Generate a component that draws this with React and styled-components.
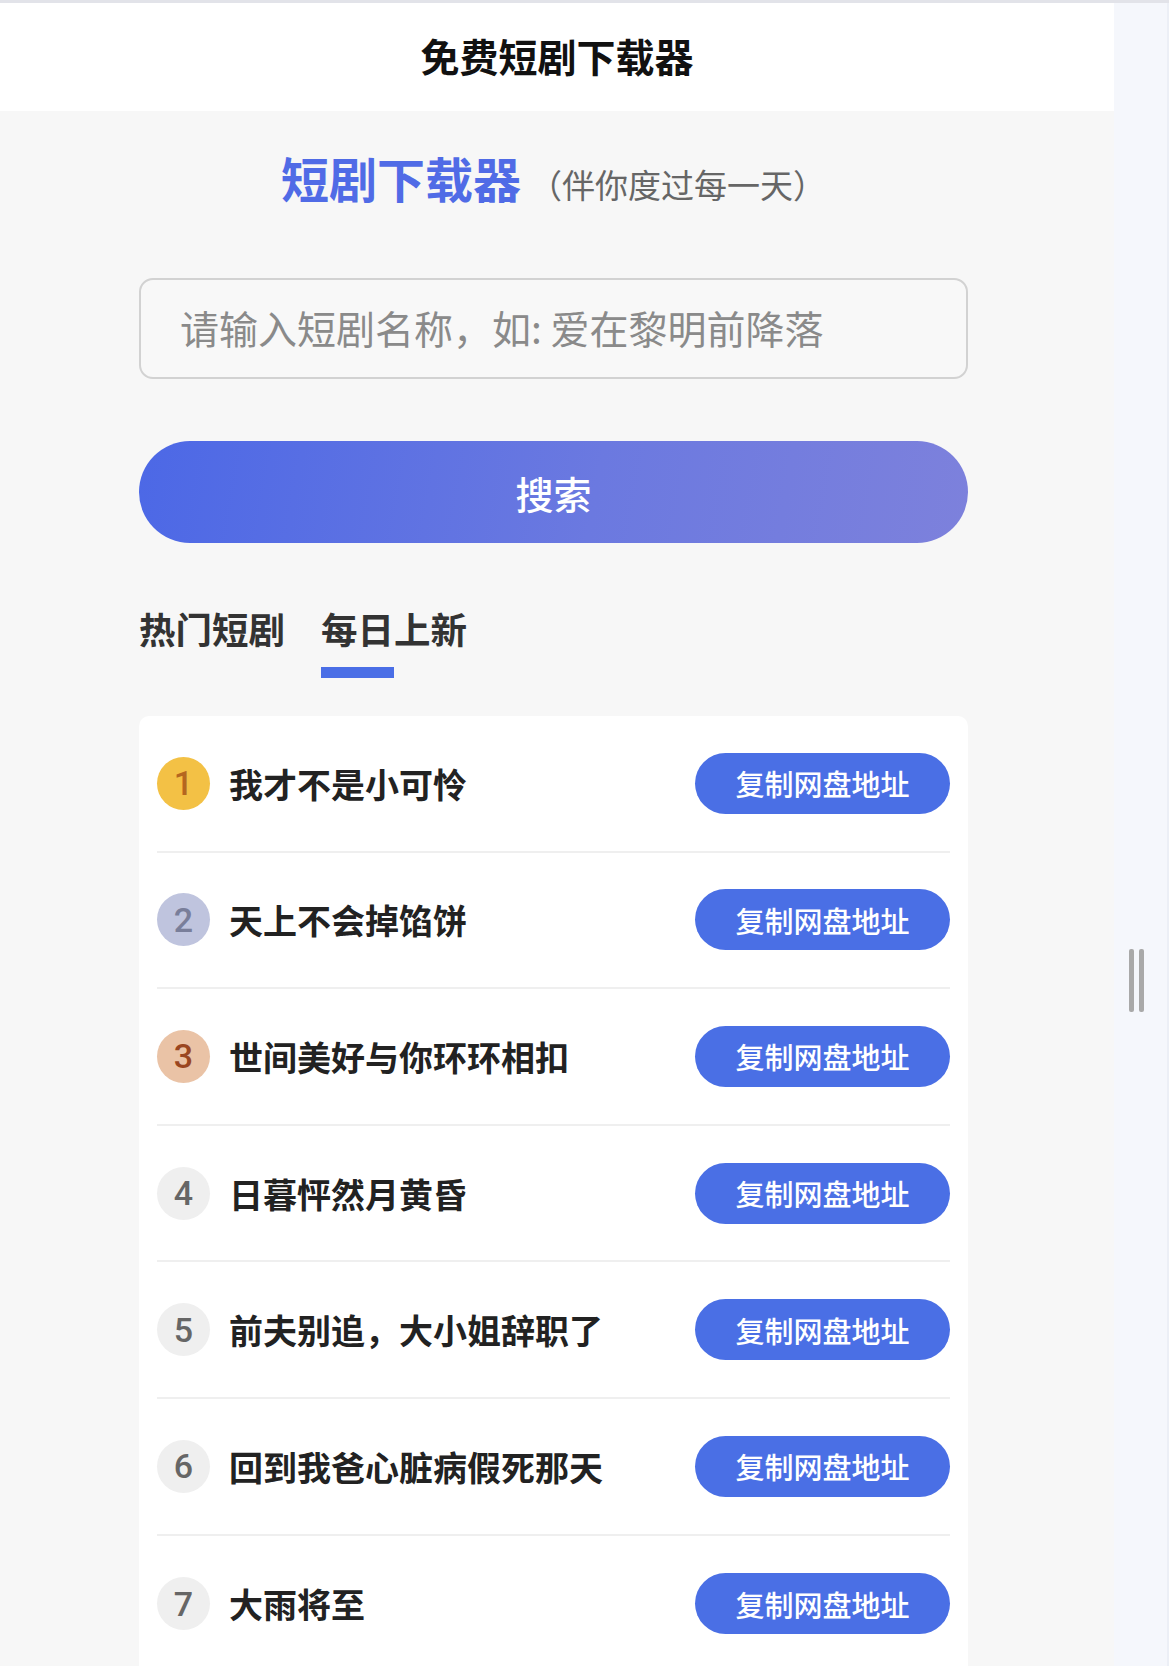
import React from 'react';
import styled, { createGlobalStyle } from 'styled-components';

const GlobalStyle = createGlobalStyle`
  * { box-sizing: border-box; }
  html, body { margin: 0; padding: 0; }
  body {
    font-family: "Noto Sans CJK SC", "Noto Sans", "Liberation Sans", sans-serif;
    background: #f7f7f7;
  }
`;

const Page = styled.div`
  display: flex;
  min-height: 100vh;
  border-top: 3px solid #e2e3e9;
`;

const Main = styled.div`
  width: 1114px;
  background: #f7f7f7;
  display: flex;
  flex-direction: column;
`;

const SideStrip = styled.div`
  flex: 1;
  background: #f5f7fc;
  border-right: 2px solid #eceff6;
  display: flex;
  justify-content: center;
  padding-top: 946px;
`;

const Handle = styled.div`
  display: flex;
  gap: 5px;
  height: 63px;
  margin-left: -8px;
`;

const HandleBar = styled.span`
  width: 5px;
  height: 100%;
  border-radius: 2px;
  background: #a9a9a9;
`;

const Header = styled.header`
  height: 108px;
  padding-bottom: 4px;
  background: #fff;
  display: flex;
  align-items: center;
  justify-content: center;
  font-size: 39px;
  font-weight: 700;
  color: #111;
`;

const Content = styled.div`
  width: 829px;
  margin-left: 139px;
  padding-top: 37px;
  display: flex;
  flex-direction: column;
  flex: 1;
`;

const Subtitle = styled.div`
  display: flex;
  align-items: baseline;
  justify-content: center;
  gap: 8px;
  line-height: 58px;
`;

const Brand = styled.span`
  font-size: 48px;
  font-weight: 700;
  color: #506be6;
`;

const Slogan = styled.span`
  font-size: 33px;
  color: #666;
`;

const SearchInput = styled.input`
  margin-top: 65px;
  height: 101px;
  width: 100%;
  border: 2px solid #d2d2d2;
  border-radius: 14px;
  background: #f8f8f8;
  padding: 0 0 4px 39px;
  font-family: inherit;
  font-size: 39px;
  color: #333;
  outline: none;
  &::placeholder { color: #8a8a8a; }
`;

const SearchButton = styled.button`
  margin-top: 62px;
  height: 102px;
  width: 100%;
  border: none;
  border-radius: 51px;
  background: linear-gradient(100deg, #4c68e6 0%, #6b79e0 55%, #7d81dc 100%);
  color: #fff;
  font-family: inherit;
  font-size: 38px;
  font-weight: 500;
`;

const Tabs = styled.div`
  display: flex;
  gap: 36px;
  margin-top: 64px;
`;

const Tab = styled.div`
  display: flex;
  flex-direction: column;
  font-size: 36.5px;
  font-weight: 700;
  color: #333;
  line-height: 44px;
  &::after {
    content: '';
    display: block;
    width: 73px;
    height: 11px;
    margin-top: 16px;
    background: ${p => (p.$active ? '#4a6ee6' : 'transparent')};
  }
`;

const Card = styled.div`
  margin-top: 38px;
  flex: 1;
  background: #fff;
  border-radius: 10px 10px 0 0;
  padding: 0 18px;
`;

const Row = styled.div`
  height: 136.6px;
  display: flex;
  align-items: center;
  border-bottom: 2px solid #efefef;
  &:last-child { border-bottom: none; }
`;

const Rank = styled.span`
  width: 53px;
  height: 53px;
  border-radius: 50%;
  flex-shrink: 0;
  display: flex;
  align-items: center;
  justify-content: center;
  font-family: Roboto, "Liberation Sans", Arial, sans-serif;
  font-size: 34px;
  font-weight: 500;
  background: ${p => p.$bg};
  color: ${p => p.$fg};
`;

const Title = styled.span`
  flex: 1;
  margin-left: 19px;
  font-size: 34px;
  font-weight: 700;
  color: #222;
`;

const CopyButton = styled.button`
  width: 255px;
  height: 61px;
  border: none;
  border-radius: 31px;
  background: #4a6fe5;
  color: #fff;
  font-family: inherit;
  font-size: 29px;
  font-weight: 500;
`;

const rankColors = {
  1: ['#f3c145', '#b5661f'],
  2: ['#bfc4de', '#797e9a'],
  3: ['#eac3a6', '#9a4620'],
};

const dramas = [
  '我才不是小可怜',
  '天上不会掉馅饼',
  '世间美好与你环环相扣',
  '日暮怦然月黄昏',
  '前夫别追，大小姐辞职了',
  '回到我爸心脏病假死那天',
  '大雨将至',
];

const App = () => {
  return (
    <>
      <GlobalStyle />
      <Page>
        <Main>
          <Header>免费短剧下载器</Header>
          <Content>
            <Subtitle>
              <Brand>短剧下载器</Brand>
              <Slogan>（伴你度过每一天）</Slogan>
            </Subtitle>
            <SearchInput placeholder="请输入短剧名称，如: 爱在黎明前降落" />
            <SearchButton>搜索</SearchButton>
            <Tabs>
              <Tab>热门短剧</Tab>
              <Tab $active>每日上新</Tab>
            </Tabs>
            <Card>
              {dramas.map((name, i) => {
                const [bg, fg] = rankColors[i + 1] || ['#efefef', '#666'];
                return (
                  <Row key={name}>
                    <Rank $bg={bg} $fg={fg}>{i + 1}</Rank>
                    <Title>{name}</Title>
                    <CopyButton>复制网盘地址</CopyButton>
                  </Row>
                );
              })}
            </Card>
          </Content>
        </Main>
        <SideStrip>
          <Handle>
            <HandleBar />
            <HandleBar />
          </Handle>
        </SideStrip>
      </Page>
    </>
  );
};

export default App;
